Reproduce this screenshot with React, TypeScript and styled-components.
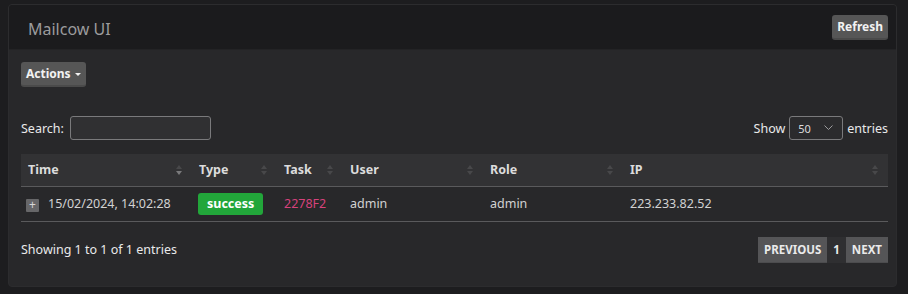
import React from "react";
import styled, { createGlobalStyle } from "styled-components";

const Global = createGlobalStyle`
  html, body { margin: 0; padding: 0; background: #1d1d1f; }
  body {
    padding: 4px 11px 7px 8px;
    font-family: "Noto Sans", "Open Sans", sans-serif;
    color: #d2d2d2;
    font-size: 12.5px;
  }
  * { box-sizing: border-box; }
`;

const Panel = styled.div`
  width: 889px;
  height: 283px;
  background: #28282a;
  border: 1px solid #2c2c2e;
  border-radius: 4px;
  overflow: hidden;
  display: flex;
  flex-direction: column;
`;

const Header = styled.div`
  height: 45px;
  background: #1b1b1d;
  display: flex;
  align-items: center;
  justify-content: space-between;
  padding: 0 8px 0 19px;
  border-bottom: 1px solid #232325;
`;

const Title = styled.div`
  font-size: 16px;
  color: #9b9b9d;
  padding-top: 3px;
`;

const Btn = styled.button`
  font-family: inherit;
  font-weight: 700;
  font-size: 12px;
  color: #f2f2f2;
  background: #565656;
  border: none;
  border-bottom: 2px solid #4a4a4a;
  border-radius: 3px;
  height: 25px;
  padding: 0 5px;
  display: inline-flex;
  align-items: center;
  gap: 4px;
  cursor: pointer;
`;

const Body = styled.div`
  padding: 12px 8px 0 12px;
  display: flex;
  flex-direction: column;
`;

const Caret = styled.span`
  width: 0;
  height: 0;
  border-left: 3px solid transparent;
  border-right: 3px solid transparent;
  border-top: 3px solid #f2f2f2;
  margin-top: 1px;
`;

const Controls = styled.div`
  display: flex;
  justify-content: space-between;
  align-items: center;
  margin-top: 28px;
  height: 26px;
`;

const Label = styled.label<{ $gap?: number }>`
  display: flex;
  align-items: center;
  gap: ${(p) => p.$gap ?? 6}px;
  color: #eaeaea;
  font-size: 12.5px;
`;

const Input = styled.input`
  width: 141px;
  height: 24px;
  background: #303032;
  border: 1px solid #7a7a7c;
  border-radius: 3px;
  color: #ddd;
  padding: 0 6px;
`;

const Select = styled.div`
  width: 54px;
  height: 24px;
  border: 1px solid #7a7a7c;
  border-radius: 3px;
  background: #2b2b2d;
  display: flex;
  align-items: center;
  justify-content: space-between;
  padding: 0 9px 0 8px;
  font-size: 11px;
  color: #dcdcdc;
`;

const Table = styled.table`
  width: 867px;
  margin-top: 13px;
  border-collapse: collapse;
  table-layout: fixed;
`;

const Th = styled.th`
  position: relative;
  height: 32px;
  background: #323234;
  text-align: left;
  font-weight: 700;
  font-size: 12.5px;
  color: #dcdcdc;
  padding: 0 7px;
  border-bottom: 1px solid #5a5a5c;
`;

const Td = styled.td<{ $color?: string }>`
  height: 35px;
  padding: 0 7px;
  font-size: 12.5px;
  color: ${(p) => p.$color || "#d2d2d2"};
  border-bottom: 1px solid #5a5a5c;
  white-space: nowrap;
`;

const SortWrap = styled.span`
  position: absolute;
  right: 10px;
  top: 50%;
  transform: translateY(-50%);
  display: flex;
  flex-direction: column;
  gap: 2px;
`;

const Tri = styled.span<{ $up?: boolean; $on?: boolean }>`
  width: 0;
  height: 0;
  border-left: 3.5px solid transparent;
  border-right: 3.5px solid transparent;
  ${(p) =>
    p.$up
      ? `border-bottom: 4px solid ${p.$on ? "#7a7a7c" : "#48484a"};`
      : `border-top: 4px solid ${p.$on ? "#7a7a7c" : "#48484a"};`}
`;

const Plus = styled.span`
  display: inline-flex;
  align-items: center;
  justify-content: center;
  width: 13px;
  height: 13px;
  background: #676769;
  color: #d8d8d8;
  font-size: 12px;
  line-height: 1;
  border-radius: 1px;
  margin: 0 9px 0 -2px;
  vertical-align: -1px;
`;

const Badge = styled.span`
  display: inline-block;
  background: #22a63a;
  color: #fff;
  font-weight: 700;
  font-size: 12.5px;
  padding: 2px 9px 3px;
  border-radius: 3px;
  margin-left: -1px;
`;

const Footer = styled.div`
  display: flex;
  justify-content: space-between;
  align-items: center;
  margin-top: 15px;
`;

const Info = styled.div`
  color: #eaeaea;
  font-size: 12.5px;
`;

const Pager = styled.div`
  display: flex;
  height: 26px;
`;

const PageBtn = styled.span<{ $active?: boolean }>`
  display: flex;
  align-items: center;
  padding: 0 6px;
  font-weight: 700;
  font-size: 11.5px;
  color: #eaeaea;
  background: ${(p) => (p.$active ? "#2f2f31" : "#555557")};
  border-bottom: 1px solid ${(p) => (p.$active ? "#2f2f31" : "#4c4c4e")};
`;

const cols = [171, 85, 66, 140, 140, 265];
const heads = ["Time", "Type", "Task", "User", "Role", "IP"];

export default function App() {
  return (
    <>
      <Global />
      <Panel>
        <Header>
          <Title>Mailcow UI</Title>
          <Btn>Refresh</Btn>
        </Header>
        <Body>
          <div>
            <Btn>
              Actions <Caret />
            </Btn>
          </div>
          <Controls>
            <Label>
              Search: <Input />
            </Label>
            <Label $gap={4}>
              Show
              <Select>
                <span>50</span>
                <svg width="9" height="6" viewBox="0 0 9 6">
                  <path d="M0.5 0.5 L4.5 4.5 L8.5 0.5" fill="none" stroke="#9a9a9c" strokeWidth="1" />
                </svg>
              </Select>
              entries
            </Label>
          </Controls>
          <Table>
            <colgroup>
              {cols.map((w, i) => (
                <col key={i} style={{ width: w }} />
              ))}
            </colgroup>
            <thead>
              <tr>
                {heads.map((h, i) => (
                  <Th key={h}>
                    {h}
                    <SortWrap>
                      <Tri $up />
                      <Tri $on={i === 0} />
                    </SortWrap>
                  </Th>
                ))}
              </tr>
            </thead>
            <tbody>
              <tr>
                <Td>
                  <Plus>+</Plus>15/02/2024, 14:02:28
                </Td>
                <Td>
                  <Badge>success</Badge>
                </Td>
                <Td $color="#d6427c">2278F2</Td>
                <Td>admin</Td>
                <Td>admin</Td>
                <Td>223.233.82.52</Td>
              </tr>
            </tbody>
          </Table>
          <Footer>
            <Info>Showing 1 to 1 of 1 entries</Info>
            <Pager>
              <PageBtn>PREVIOUS</PageBtn>
              <PageBtn $active>1</PageBtn>
              <PageBtn>NEXT</PageBtn>
            </Pager>
          </Footer>
        </Body>
      </Panel>
    </>
  );
}
